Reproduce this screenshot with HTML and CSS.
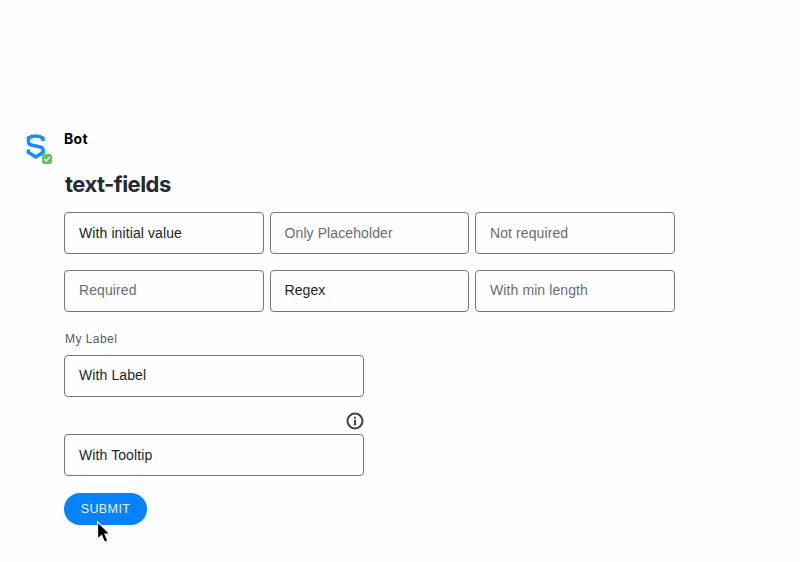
FILE: index.html
```html
<!DOCTYPE html>
<html lang="en">
<head>
<meta charset="utf-8">
<title>Bot</title>
<link rel="stylesheet" href="styles.css">
</head>
<body>
<main class="message">
  <div class="avatar">
    <svg class="logo" viewBox="0 0 20 26"><path d="M17 8V5.200C15.200 3.700 12.800 3 9.800 3S4.200 3.700 2.500 5V9.200C2.500 11.400 4.500 12 9.800 12.900S17.100 14.500 17.100 16.600V19.200L9.800 24L2.400 19.400V16.500" fill="none" stroke="#168cff" stroke-width="3.500"/></svg>
    <svg class="badge" viewBox="0 0 10 10"><rect width="10" height="10" rx="2.300" fill="#58c755"/><path d="M2.400 5.100l1.900 1.800 3.400-3.600" fill="none" stroke="#fff" stroke-width="1.500"/></svg>
  </div>
  <form class="form">
    <div class="sender">Bot</div>
    <h1 class="title">text-fields</h1>
    <div class="grid">
      <input class="field low" value="With initial value">
      <input class="field low" placeholder="Only Placeholder">
      <input class="field low" placeholder="Not required">
      <input class="field" placeholder="Required">
      <input class="field" value="Regex">
      <input class="field" placeholder="With min length">
    </div>
    <label class="label" for="labelled">My Label</label>
    <input class="field wide" id="labelled" value="With Label">
    <div class="hint">
      <svg class="info" viewBox="0 0 18 18"><circle cx="9" cy="9" r="7.500" fill="none" stroke="#3f434b" stroke-width="2"/><path d="M8 4.700h2v2H8zM8 8h2v5.200H8z" fill="#3f434b"/></svg>
    </div>
    <input class="field wide low" value="With Tooltip">
    <button class="submit" type="button">SUBMIT</button>
  </form>
</main>
<svg class="cursor" viewBox="0 0 14 22"><path d="M1.500 1.500V17.500L5.200 14.200 8 20.500 11 19.200 8.300 13H13Z" fill="#000" stroke="#fff" stroke-width="1"/></svg>
</body>
</html>
```

FILE: styles.css
```css
* { box-sizing: border-box; }
body {
  margin: 0;
  background: #fefdff;
  font-family: "Liberation Sans", Arial, sans-serif;
  color: #1d1f23;
}
.message { display: flex; padding: 130px 0 0 26px; }
.avatar { position: relative; width: 38px; height: 34px; padding-top: 3px; }
.logo { display: block; width: 20px; height: 26px; }
.badge { position: absolute; left: 16px; top: 24px; width: 10px; height: 10px; }
.form { display: flex; flex-direction: column; align-items: flex-start; width: 612px; }
.sender {
  height: 18px;
  font: 700 14px/18px Inter, sans-serif;
  letter-spacing: 0.300px;
  color: #000;
}
.title {
  margin: 22px 0 0 1px;
  height: 28px;
  font: 700 22px/28px Inter, sans-serif;
  letter-spacing: -0.550px;
  color: #272a30;
}
.grid {
  display: grid;
  grid-template-columns: repeat(3, 199.500px);
  gap: 16px 6px;
  margin-top: 14px;
}
.field {
  width: 100%;
  height: 42px;
  margin: 0;
  padding: 0 14px 2px;
  border: 1px solid #71757d;
  border-radius: 4px;
  background: #fefdff;
  font: 14px "Liberation Sans", Arial, sans-serif;
  letter-spacing: 0.100px;
  color: #1d1f23;
}
.low { padding-bottom: 0; }
.field::placeholder { color: #6b6c70; opacity: 1; }
.wide { width: 300px; }
.label {
  height: 16px;
  margin: 19px 0 8px 1px;
  font-size: 12px;
  line-height: 16px;
  letter-spacing: 0.450px;
  color: #565a62;
}
.hint { display: flex; justify-content: flex-end; width: 300px; height: 37px; padding-top: 15px; }
.info { width: 18px; height: 18px; }
.submit {
  width: 83px;
  height: 32px;
  margin-top: 17px;
  padding: 0;
  border: 0;
  border-radius: 16px;
  background: #0583ff;
  color: #e6f3ff;
  font: 12.500px "Liberation Sans", Arial, sans-serif;
  letter-spacing: 0.400px;
}
.cursor { position: absolute; left: 96px; top: 520px; width: 15px; height: 24px; }
```
